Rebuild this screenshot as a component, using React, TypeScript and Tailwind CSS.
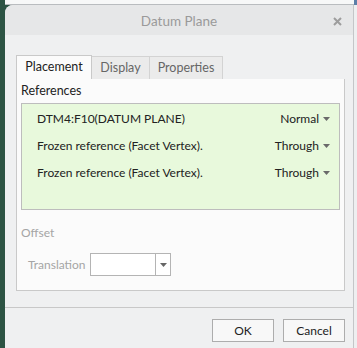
import React from 'react';

function Caret({ className = '' }: { className?: string }) {
  return (
    <svg width="7" height="4" viewBox="0 0 7 4" className={className}>
      <path d="M0 0h7L3.5 4z" fill="currentColor" />
    </svg>
  );
}

function RefRow({ name, type }: { name: string; type: string }) {
  return (
    <div className="flex h-[27px] items-center justify-between pl-[15px] pr-[9px]">
      <span>{name}</span>
      <span className="flex items-center gap-[4px]">
        {type}
        <Caret className="text-[#6a6a6a]" />
      </span>
    </div>
  );
}

export default function App() {
  return (
    <div className="flex h-[348px] w-[357px] flex-col overflow-hidden bg-[#2d5444] font-['Lato',sans-serif] text-[12px] text-[#222]">
      <div className="flex h-[5px] pl-[5px]">
        <div className="flex-1 border-b border-[#b9bcbf] bg-[#f7f8f8]" />
        <div className="w-[3px] bg-[#5c7fa8]" />
      </div>
      <div className="flex flex-1 pl-[5px]">
        <div className="flex w-[348px] flex-col rounded-tl-[8px] bg-[#eff0f1]">
          <div className="relative flex h-[30px] items-center justify-center rounded-tl-[8px] bg-[#e6e7e8] text-[#9a9a9a]">
            <span className="pt-[2px] text-[13.5px]">Datum Plane</span>
            <svg width="9" height="9" viewBox="0 0 9 9" className="absolute right-[11px] top-[12px]">
              <path d="M1 1l7 7M8 1L1 8" stroke="#9d9d9d" strokeWidth="2" />
            </svg>
          </div>
          <div className="pl-[11px] pr-[8px] pt-[20px]">
            <div className="flex h-[24px] items-end">
              <div className="flex h-[24px] w-[76px] items-center justify-center border border-b-0 border-[#c9c9c9] bg-[#fbfbfb] text-[12.5px]">Placement</div>
              <div className="flex h-[23px] w-[58px] items-center justify-center border-t border-r border-[#d3d3d3] bg-[#ebebeb] text-[12.5px] text-[#666]">Display</div>
              <div className="flex h-[23px] w-[73px] items-center justify-center border-t border-r border-[#d3d3d3] bg-[#ebebeb] text-[12.5px] text-[#666]">Properties</div>
            </div>
            <div className="h-[212px] border border-t-0 border-[#c9c9c9] bg-[#fbfbfb] px-[4px] pt-[1px]">
              <div className="flex h-[23px] items-center text-[12.5px]">References</div>
              <div className="h-[107px] border border-[#bdbdbd] bg-[#e8f9dc] pt-[1px]">
                <RefRow name="DTM4:F10(DATUM PLANE)" type="Normal" />
                <RefRow name="Frozen reference (Facet Vertex)." type="Through" />
                <RefRow name="Frozen reference (Facet Vertex)." type="Through" />
              </div>
              <div className="mt-[13px] flex h-[20px] items-center text-[#a5a5a5]">Offset</div>
              <div className="mt-[10px] flex items-center pl-[7px] text-[#a5a5a5]">
                <span className="w-[62px]">Translation</span>
                <div className="flex h-[23px] w-[81px] border border-[#b4b4b4] bg-white">
                  <div className="flex-1" />
                  <div className="flex w-[15px] items-center justify-center border-l border-[#b4b4b4] text-[#666]">
                    <Caret />
                  </div>
                </div>
              </div>
            </div>
          </div>
          <div className="mt-[16px] border-t border-[#c8c8c8]" />
          <div className="flex justify-end gap-[9px] pr-[8px] pt-[11px]">
            <button className="h-[23px] w-[62px] border border-[#adadad] bg-[#f8f8f8]">OK</button>
            <button className="h-[23px] w-[62px] border border-[#adadad] bg-[#f8f8f8]">Cancel</button>
          </div>
        </div>
        <div className="flex-1 border-l border-[#c4c6c8] bg-[#eeeff0]" />
      </div>
    </div>
  );
}
